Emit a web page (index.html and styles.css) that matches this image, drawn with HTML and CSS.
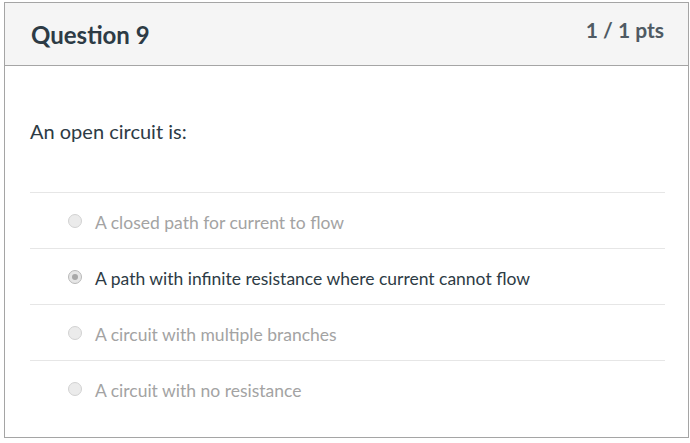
FILE: index.html
```html
<!DOCTYPE html>
<html>
<head>
<meta charset="utf-8">
<link rel="stylesheet" href="styles.css">
</head>
<body>
<div class="question">
  <div class="header">
    <h2 class="title">Question 9</h2>
    <div class="pts">1 / 1 pts</div>
  </div>
  <div class="content">
    <p class="prompt">An open circuit is:</p>
    <div class="answers">
      <div class="answer"><span class="radio"></span><span class="label muted">A closed path for current to flow</span></div>
      <div class="answer"><span class="radio checked"></span><span class="label">A path with infinite resistance where current cannot flow</span></div>
      <div class="answer"><span class="radio"></span><span class="label muted">A circuit with multiple branches</span></div>
      <div class="answer"><span class="radio"></span><span class="label muted">A circuit with no resistance</span></div>
    </div>
  </div>
</div>
</body>
</html>
```
FILE: styles.css
```css
html, body { margin: 0; padding: 0; background: #fff; }
body {
  padding: 2px 1px 0 4px;
  font-family: Lato, "Open Sans", sans-serif;
  color: #2d3b45;
}
.question {
  border: 1px solid #a5a5a5;
  height: 434px;
  box-sizing: content-box;
}
.header {
  background: #f5f5f5;
  border-bottom: 1px solid #a5a5a5;
  height: 62px;
  display: flex;
  justify-content: space-between;
  align-items: flex-start;
  padding: 0 24px 0 26px;
}
.title {
  margin: 0;
  margin-top: 17px;
  font-size: 24px;
  font-weight: 700;
  line-height: 30px;
  color: #2d3b45;
}
.pts {
  margin-top: 14px;
  font-size: 21px;
  font-weight: 700;
  line-height: 26px;
  color: #4f5a63;
}
.content {
  padding: 0 23px 0 25px;
}
.prompt {
  margin: 0;
  padding-top: 52px;
  font-size: 20px;
  line-height: 26px;
  height: 74px;
  color: #2d3b45;
}
.answer {
  border-top: 1px solid #e6e6e6;
  height: 55px;
  display: flex;
  align-items: center;
  padding-left: 38px;
}
.radio {
  width: 12px;
  height: 12px;
  border-radius: 50%;
  border: 1px solid #d2d2d2;
  background: #ebebeb;
  margin-right: 13px;
  position: relative;
  flex: none;
}
.radio.checked {
  background: #e6e6e6;
  border-color: #b9b9b9;
}
.radio.checked::after {
  content: "";
  position: absolute;
  left: 3px; top: 3px;
  width: 6px; height: 6px;
  border-radius: 50%;
  background: #a8a8a8;
}
.label {
  font-size: 17.5px;
  line-height: 22px;
  padding-top: 4px;
  color: #2d3b45;
}
.label.muted { color: #a3a3a3; }
```
